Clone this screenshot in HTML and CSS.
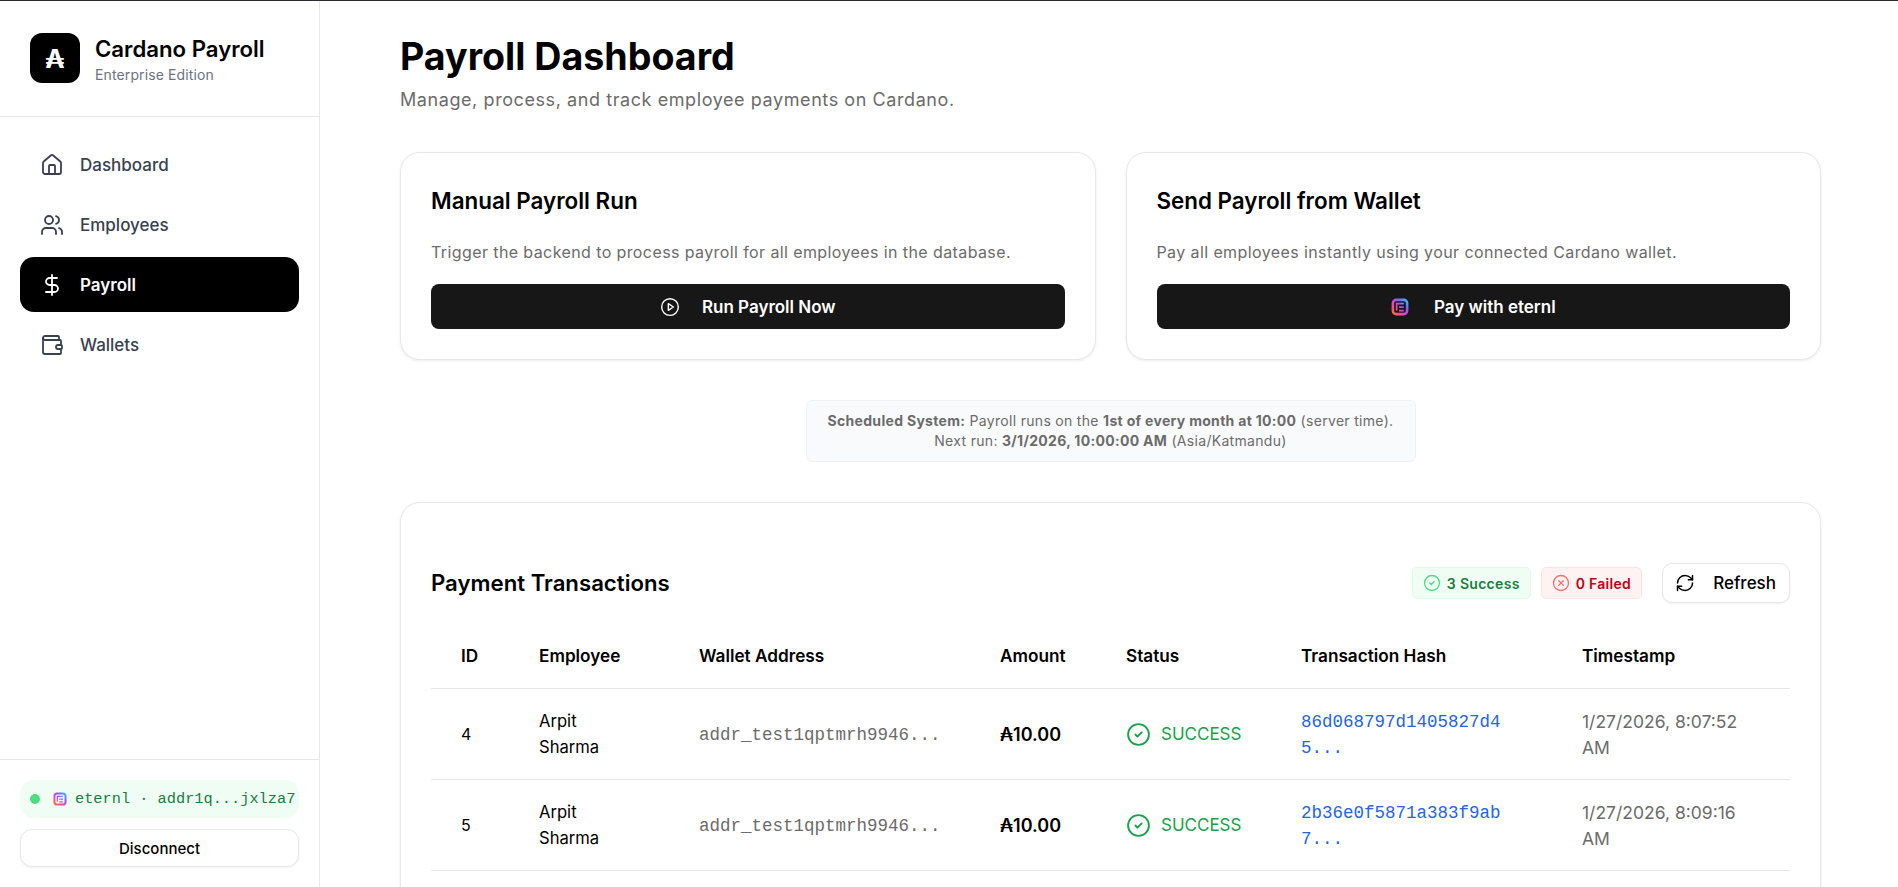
FILE: index.html
```html
<!DOCTYPE html>
<html lang="en">
<head>
<meta charset="utf-8">
<title>Cardano Payroll</title>
<link rel="stylesheet" href="styles.css">
</head>
<body>
<svg class="sprite" aria-hidden="true">
  <defs>
    <linearGradient id="eternl-grad" x1="0" y1="1" x2="1" y2="0">
      <stop offset="0" stop-color="#ff6a3c"/>
      <stop offset="0.35" stop-color="#f040c0"/>
      <stop offset="0.7" stop-color="#8a5cff"/>
      <stop offset="1" stop-color="#38bdf8"/>
    </linearGradient>
  </defs>
  <symbol id="i-home" viewBox="0 0 24 24"><path d="M15 21v-8a1 1 0 0 0-1-1h-4a1 1 0 0 0-1 1v8"/><path d="M3 10a2 2 0 0 1 .709-1.528l7-5.999a2 2 0 0 1 2.582 0l7 5.999A2 2 0 0 1 21 10v9a2 2 0 0 1-2 2H5a2 2 0 0 1-2-2z"/></symbol>
  <symbol id="i-users" viewBox="0 0 24 24"><path d="M16 21v-2a4 4 0 0 0-4-4H6a4 4 0 0 0-4 4v2"/><circle cx="9" cy="7" r="4"/><path d="M22 21v-2a4 4 0 0 0-3-3.87"/><path d="M16 3.13a4 4 0 0 1 0 7.75"/></symbol>
  <symbol id="i-dollar" viewBox="0 0 24 24"><line x1="12" x2="12" y1="2" y2="22"/><path d="M17 5H9.5a3.5 3.5 0 0 0 0 7h5a3.5 3.5 0 0 1 0 7H6"/></symbol>
  <symbol id="i-wallet" viewBox="0 0 24 24"><path d="M19 7V4a1 1 0 0 0-1-1H5a2 2 0 0 0 0 4h15a1 1 0 0 1 1 1v4h-3a2 2 0 0 0 0 4h3a1 1 0 0 0 1-1v-2a1 1 0 0 0-1-1"/><path d="M3 5v14a2 2 0 0 0 2 2h15a1 1 0 0 0 1-1v-4"/></symbol>
  <symbol id="i-play" viewBox="0 0 24 24"><circle cx="12" cy="12" r="10"/><path d="M10 8l6 4-6 4z"/></symbol>
  <symbol id="i-refresh" viewBox="0 0 24 24"><path d="M3 12a9 9 0 0 1 9-9 9.75 9.75 0 0 1 6.74 2.74L21 8"/><path d="M21 3v5h-5"/><path d="M21 12a9 9 0 0 1-9 9 9.75 9.75 0 0 1-6.74-2.74L3 16"/><path d="M8 16H3v5"/></symbol>
  <symbol id="i-check" viewBox="0 0 24 24"><circle cx="12" cy="12" r="10"/><path d="M9 12l2 2 4-4"/></symbol>
  <symbol id="i-x" viewBox="0 0 24 24"><circle cx="12" cy="12" r="10"/><path d="M15 9l-6 6"/><path d="M9 9l6 6"/></symbol>
  <symbol id="i-eternl" viewBox="0 0 24 24"><rect x="2.500" y="2.500" width="19" height="19" rx="4.500" fill="none" stroke="url(#eternl-grad)" stroke-width="3.400"/><path d="M7.500 16.800V7.500H17M10.800 12.200H17M10.800 16.800H17" fill="none" stroke="url(#eternl-grad)" stroke-width="2.200"/></symbol>
</svg>

<div class="app">
  <aside class="sidebar">
    <div class="brand">
      <div class="brand-logo">₳</div>
      <div class="brand-text">
        <div class="brand-name">Cardano Payroll</div>
        <div class="brand-sub">Enterprise Edition</div>
      </div>
    </div>
    <nav class="nav">
      <a class="nav-item"><svg class="icon nav-icon"><use href="#i-home"/></svg>Dashboard</a>
      <a class="nav-item"><svg class="icon nav-icon"><use href="#i-users"/></svg>Employees</a>
      <a class="nav-item active"><svg class="icon nav-icon"><use href="#i-dollar"/></svg>Payroll</a>
      <a class="nav-item"><svg class="icon nav-icon"><use href="#i-wallet"/></svg>Wallets</a>
    </nav>
    <div class="side-foot">
      <div class="wallet-chip">
        <span class="wallet-dot"></span>
        <svg class="eternl-sm"><use href="#i-eternl"/></svg>
        <span class="wallet-text">eternl · addr1q...jxlza7</span>
      </div>
      <button class="disconnect">Disconnect</button>
    </div>
  </aside>

  <main class="main">
    <h1 class="page-title">Payroll Dashboard</h1>
    <p class="page-sub">Manage, process, and track employee payments on Cardano.</p>

    <section class="cards">
      <div class="card">
        <h2 class="card-title">Manual Payroll Run</h2>
        <p class="card-desc">Trigger the backend to process payroll for all employees in the database.</p>
        <button class="primary-btn"><svg class="icon btn-icon"><use href="#i-play"/></svg>Run Payroll Now</button>
      </div>
      <div class="card">
        <h2 class="card-title">Send Payroll from Wallet</h2>
        <p class="card-desc">Pay all employees instantly using your connected Cardano wallet.</p>
        <button class="primary-btn"><svg class="btn-eternl"><use href="#i-eternl"/></svg>Pay with eternl</button>
      </div>
    </section>

    <div class="note-wrap">
      <div class="note">
        <strong>Scheduled System:</strong> Payroll runs on the <strong>1st of every month at 10:00</strong> (server time).<br>
        Next run: <strong>3/1/2026, 10:00:00 AM</strong> (Asia/Katmandu)
      </div>
    </div>

    <section class="tx-card">
      <div class="tx-head">
        <h2 class="tx-title">Payment Transactions</h2>
        <div class="tx-tools">
          <span class="pill pill-ok"><svg class="icon pill-icon"><use href="#i-check"/></svg>3 Success</span>
          <span class="pill pill-bad"><svg class="icon pill-icon"><use href="#i-x"/></svg>0 Failed</span>
          <button class="refresh"><svg class="icon refresh-icon"><use href="#i-refresh"/></svg>Refresh</button>
        </div>
      </div>
      <table class="tx-table">
        <colgroup>
          <col class="c-id"><col class="c-emp"><col class="c-addr"><col class="c-amt"><col class="c-status"><col class="c-hash"><col class="c-time">
        </colgroup>
        <thead>
          <tr><th>ID</th><th>Employee</th><th>Wallet Address</th><th>Amount</th><th>Status</th><th>Transaction Hash</th><th>Timestamp</th></tr>
        </thead>
        <tbody>
          <tr>
            <td>4</td><td class="name">Arpit<br>Sharma</td><td class="mono muted">addr_test1qptmrh9946...</td><td class="amount">₳10.00</td>
            <td><span class="status"><svg class="icon status-icon"><use href="#i-check"/></svg>SUCCESS</span></td>
            <td class="mono hash">86d068797d1405827d4<br>5...</td><td class="muted time">1/27/2026, 8:07:52<br>AM</td>
          </tr>
          <tr>
            <td>5</td><td class="name">Arpit<br>Sharma</td><td class="mono muted">addr_test1qptmrh9946...</td><td class="amount">₳10.00</td>
            <td><span class="status"><svg class="icon status-icon"><use href="#i-check"/></svg>SUCCESS</span></td>
            <td class="mono hash">2b36e0f5871a383f9ab<br>7...</td><td class="muted time">1/27/2026, 8:09:16<br>AM</td>
          </tr>
        </tbody>
      </table>
    </section>
  </main>
</div>
</body>
</html>
```

FILE: styles.css
```css
* { box-sizing: border-box; }
html, body { margin: 0; height: 100%; overflow: hidden; }
body {
  font-family: "Inter", "Liberation Sans", sans-serif;
  color: #000;
  background: #fff;
  border-top: 1px solid #2a2d33;
}
.sprite { width: 0; height: 0; position: absolute; }
.icon { fill: none; stroke: currentColor; stroke-width: 2; stroke-linecap: round; stroke-linejoin: round; flex: none; }

.app { display: flex; height: 886px; }

.sidebar {
  width: 320px; flex: none;
  border-right: 1px solid #e5e7eb;
  display: flex; flex-direction: column;
}
.brand {
  height: 116px; padding: 32px 30px 0;
  display: flex; gap: 15px;
  border-bottom: 1px solid #e5e7eb;
}
.brand-logo {
  width: 50px; height: 50px; flex: none;
  background: #000; color: #fff; border-radius: 12px;
  display: flex; align-items: center; justify-content: center;
  font-size: 26px; font-weight: 700;
}
.brand-name { font-size: 22.2px; font-weight: 600; line-height: 30px; margin-top: 1px; }
.brand-sub { font-size: 14px; letter-spacing: .12px; color: #6b7280; line-height: 20px; margin-top: 1px; }

.nav { padding: 20px 20px 0; display: flex; flex-direction: column; gap: 5px; flex: 1; }
.nav-item {
  height: 55px; border-radius: 14px; padding: 0 20px;
  display: flex; align-items: center; gap: 16px;
  font-size: 17px; font-weight: 500; color: #374151;
}
.nav-item.active { background: #000; color: #fff; font-weight: 600; }
.nav-icon { width: 24px; height: 24px; stroke-width: 1.8; }

.side-foot { border-top: 1px solid #e5e7eb; padding: 20px; display: flex; flex-direction: column; gap: 11px; height: 128px; }
.wallet-chip {
  height: 40px; border-radius: 14px; background: #f0fdf4;
  display: flex; align-items: center; padding: 0 10px; gap: 13px;
  color: #15803d;
}
.wallet-dot { width: 10px; height: 10px; border-radius: 50%; background: #4ade80; flex: none; }
.eternl-sm { width: 14px; height: 14px; flex: none; margin-right: -5px; }
.wallet-text { font-family: "Liberation Mono", monospace; font-size: 15.3px; white-space: nowrap; }
.disconnect {
  height: 39px; border-radius: 12px; background: #fff;
  border: 1px solid #e5e7eb; box-shadow: 0 1px 2px rgba(0,0,0,.06);
  font: 500 15px "Inter", sans-serif; color: #000;
}

.main { flex: 1; min-width: 0; padding: 30px 77px 0 80px; }
.page-title { margin: 0; font-size: 37.6px; font-weight: 700; line-height: 52px; }
.page-sub { margin: 3px 0 0; font-size: 18px; letter-spacing: .58px; line-height: 28px; color: #6b6b6b; }

.cards { display: grid; grid-template-columns: 1fr 1fr; gap: 30px; margin-top: 38px; }
.card {
  height: 208px; padding: 33px 30px 0;
  border: 1px solid #e5e7eb; border-radius: 20px; background: #fff;
  box-shadow: 0 1px 3px rgba(0,0,0,.08);
}
.card-title { margin: 0; font-size: 22.4px; font-weight: 600; line-height: 30px; }
.card-desc { margin: 21px 0 0; font-size: 16px; letter-spacing: .4px; line-height: 30px; color: #6b6b6b; }
.primary-btn {
  width: 100%; height: 45px; margin-top: 17px;
  background: #171717; color: #fff; border: 0; border-radius: 8px;
  display: flex; align-items: center; justify-content: center; gap: 22px;
  font: 600 17px "Inter", sans-serif;
}
.btn-icon { width: 20px; height: 20px; stroke-width: 1.7; }
.btn-eternl { width: 18px; height: 18px; flex: none; margin-right: 3px; }

.note-wrap { display: flex; justify-content: center; margin-top: 40px; }
.note {
  width: 610px; height: 62px; padding: 10px 10px;
  background: #f9fafb; border: 1px solid #f0f1f3; border-radius: 6px;
  font-size: 14px; letter-spacing: .31px; line-height: 20px; color: #6b6b6b; text-align: center;
}

.tx-card {
  margin-top: 40px; padding: 0 30px;
  border: 1px solid #e5e7eb; border-radius: 20px; background: #fff;
  box-shadow: 0 1px 3px rgba(0,0,0,.08);
  height: 500px;
}
.tx-head { display: flex; align-items: center; justify-content: space-between; margin-top: 60px; height: 40px; }
.tx-title { margin: -2px 0 0; font-size: 22.2px; font-weight: 600; }
.tx-tools { display: flex; align-items: center; gap: 10px; }
.pill {
  height: 32px; padding: 0 10px; border-radius: 5px;
  display: inline-flex; align-items: center; gap: 6px;
  font-size: 14px; letter-spacing: .3px; font-weight: 600; border: 1px solid;
}
.pill-ok { background: #f0fdf4; border-color: #dcfce7; color: #15803d; }
.pill-bad { background: #fef2f2; border-color: #fee2e2; color: #c00014; margin-right: 10px; }
.pill-ok .pill-icon { color: #4ade80; }
.pill-bad .pill-icon { color: #f87171; }
.pill-icon { width: 18px; height: 18px; stroke-width: 1.7; }
.refresh {
  height: 40px; padding: 0 13px 0 12px; border-radius: 10px; background: #fff;
  border: 1px solid #e5e7eb; box-shadow: 0 1px 2px rgba(0,0,0,.06);
  display: inline-flex; align-items: center; gap: 18px;
  font: 500 17px "Inter", sans-serif; color: #000;
}
.refresh-icon { width: 20px; height: 20px; stroke-width: 1.8; }

.tx-table { width: 100%; border-collapse: collapse; table-layout: fixed; margin-top: 19px; }
.c-id { width: 78px; } .c-emp { width: 160px; } .c-addr { width: 301px; } .c-amt { width: 126px; }
.c-status { width: 175px; } .c-hash { width: 281px; } .c-time { width: auto; }
.tx-table th {
  height: 66px; padding: 2px 30px 0; text-align: left;
  font-size: 17.2px; font-weight: 600;
  border-bottom: 1px solid #e5e7eb;
}
.tx-table td {
  height: 91px; padding: 2px 30px 0;
  font-size: 16px; line-height: 25.500px;
  border-bottom: 1px solid #e5e7eb;
  white-space: nowrap;
}
.tx-table .name { font-size: 16.6px; }
.tx-table .mono { font-family: "Liberation Mono", monospace; font-size: 17.5px; padding-top: 4px; }
.tx-table .time { font-size: 17.5px; }
.muted { color: #6b6b6b; }
.hash { color: #2563eb; }
.tx-table .amount { font-weight: 600; font-size: 18px; }
.status { display: flex; align-items: center; gap: 10px; font-size: 17px; color: #16a34a; }
.status-icon { width: 25px; height: 25px; stroke-width: 1.8; }
```
